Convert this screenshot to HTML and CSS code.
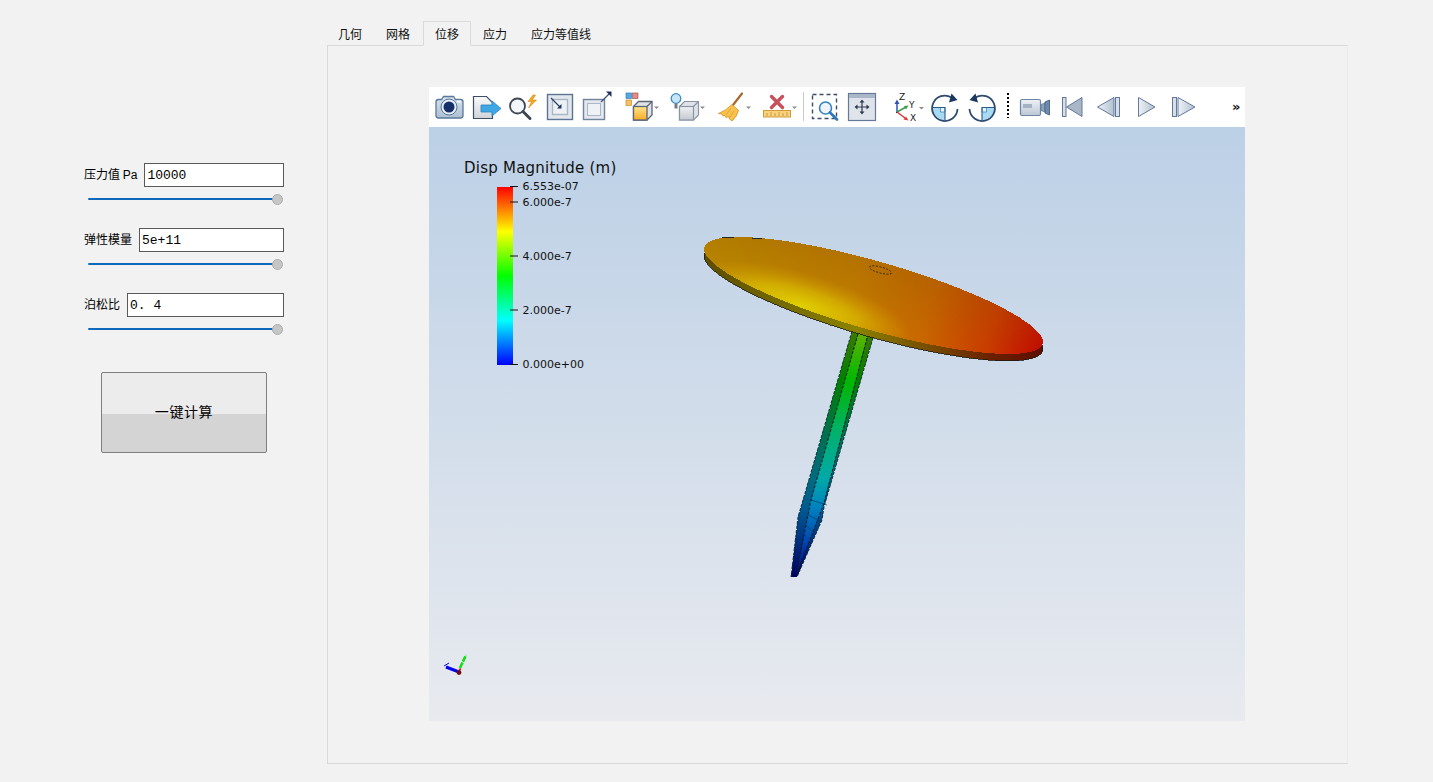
FILE: index.html
```html
<!DOCTYPE html>
<html lang="zh">
<head>
<meta charset="utf-8">
<title>位移</title>
<link rel="stylesheet" href="styles.css">
</head>
<body>
<div class="app">
  <aside class="side">
    <div class="param">
      <div class="param-row"><label class="param-label">压力值 <span class="unit">Pa</span></label><input class="param-input" value="10000"></div>
      <div class="slider"><span class="thumb"></span></div>
    </div>
    <div class="param">
      <div class="param-row"><label class="param-label">弹性模量</label><input class="param-input" value="5e+11"></div>
      <div class="slider"><span class="thumb"></span></div>
    </div>
    <div class="param">
      <div class="param-row"><label class="param-label">泊松比</label><input class="param-input" value="0. 4"></div>
      <div class="slider"><span class="thumb"></span></div>
    </div>
    <button class="run">一键计算</button>
  </aside>
  <main class="main">
    <nav class="tabs">
      <span class="tab">几何</span><span class="tab">网格</span><span class="tab active">位移</span><span class="tab">应力</span><span class="tab">应力等值线</span>
    </nav>
    <section class="pane">
      <div class="viewer">
        <div class="toolbar">
          <svg class="ico" width="37" height="40" viewBox="431 0 37 40">
            <defs><linearGradient id="cam" x1="0" y1="0" x2="0" y2="1"><stop offset="0" stop-color="#d8e3ee"/><stop offset="1" stop-color="#aebfd2"/></linearGradient></defs>
            <path d="M438.500 12.500h3l2-3h10l2 3h5q2.500 0 2.500 2.500v13.500q0 2.500-2.500 2.500h-22q-2.500 0-2.500-2.500v-13.500q0-2.500 2.500-2.500z" fill="url(#cam)" stroke="#5a789c" stroke-width="1.300"/>
            <circle cx="449" cy="20" r="8" fill="#e6eef6" stroke="#56759a"/>
            <circle cx="449" cy="20" r="5.500" fill="#15306a"/>
            <rect x="457" y="13.500" width="4" height="2" fill="#f4f7fa"/>
          </svg>
          <svg class="ico" width="37" height="40" viewBox="468 0 37 40">
            <defs><linearGradient id="pg" x1="0" y1="0" x2="0" y2="1"><stop offset="0" stop-color="#fafafa"/><stop offset="1" stop-color="#cfd3d8"/></linearGradient></defs>
            <path d="M473.500 9.500h13l6 6v16h-19z" fill="url(#pg)" stroke="#3d4f66" stroke-width="1.200"/>
            <path d="M481 18h11v-4l9 7.500-9 7.500v-4h-11z" fill="#3ea7e4" stroke="#2a83c0" stroke-width=".8"/>
          </svg>
          <svg class="ico" width="37" height="40" viewBox="505 0 37 40">
            <circle cx="517.500" cy="19" r="7.500" fill="#f4f7fa" stroke="#3f4752" stroke-width="1.800"/>
            <path d="M523 24.500l7 7" stroke="#3f4752" stroke-width="3" stroke-linecap="round"/>
            <path d="M533 8l-5 6.500h3.500l-3 6.500 8-8h-4l3-5z" fill="#f3a827" stroke="#d98a12" stroke-width=".6"/>
          </svg>
          <svg class="ico" width="37" height="40" viewBox="542 0 37 40">
            <rect x="547.500" y="7.500" width="25" height="25" fill="#e2e7ed" stroke="#5c7391" stroke-width="1.400"/>
            <rect x="552.500" y="12.500" width="15" height="15" fill="#eef1f4" stroke="#a9b6c6" stroke-width="1.400"/>
            <path d="M551 11l9 9" stroke="#2a3f66" stroke-width="1.200"/>
            <path d="M561.500 21.500v-4.500l-4.500 4.500z" fill="#1c3160"/>
          </svg>
          <svg class="ico" width="37" height="40" viewBox="579 0 37 40">
            <rect x="583.500" y="12.500" width="21" height="20" fill="#e4e8ee" stroke="#71849d" stroke-width="1.400"/>
            <rect x="587.500" y="16.500" width="13" height="12" fill="#eff2f5" stroke="#aab6c5"/>
            <path d="M601 15l8-8" stroke="#3c5478" stroke-width="1.300"/>
            <path d="M611.500 4.500v5.500l-5.500-5.500z" fill="#1c3160"/>
          </svg>
          <svg class="ico" width="48" height="40" viewBox="616 0 48 40">
            <rect x="626" y="6" width="5.500" height="5.500" fill="#52a8e0" stroke="#3b82b6" stroke-width=".7"/>
            <rect x="632.500" y="6" width="5.500" height="5.500" fill="#e08a8a" stroke="#a85a5a" stroke-width=".7"/>
            <rect x="626" y="13" width="5.500" height="5.500" fill="#f5c069" stroke="#c98a2a" stroke-width=".7"/>
            <defs><linearGradient id="oc" x1="0" y1="0" x2="0" y2="1"><stop offset="0" stop-color="#ffe48c"/><stop offset="1" stop-color="#f9ac26"/></linearGradient></defs>
            <path d="M633.500 19.500l5-5h13.500v13.500l-5 5h-13.500z" fill="#dfe3e8" stroke="#5b6675" stroke-width="1.300"/>
            <rect x="633.500" y="19.500" width="13.500" height="13.500" fill="url(#oc)" stroke="#5b6675" stroke-width="1.300"/>
            <path d="M647 19.500l5-5" stroke="#5b6675" stroke-width="1.300"/>
            <path class="drop" d="M654 19.500h5l-2.500 2.500z"/>
          </svg>
          <svg class="ico" width="48" height="40" viewBox="664 0 48 40">
            <circle cx="676" cy="11.500" r="4.800" fill="#c6e6f8" stroke="#3f8ac4" stroke-width="1.300"/>
            <rect x="674.500" y="16.500" width="3" height="5" fill="#6f7d8c"/>
            <defs><linearGradient id="gc" x1="0" y1="0" x2="0" y2="1"><stop offset="0" stop-color="#eef0f3"/><stop offset="1" stop-color="#c4cad1"/></linearGradient></defs>
            <path d="M679.500 19.500l5-5h14v13.500l-5 5h-14z" fill="#dfe3e8" stroke="#8b95a2" stroke-width="1.200"/>
            <rect x="679.500" y="19.500" width="14" height="13.500" fill="url(#gc)" stroke="#8b95a2" stroke-width="1.200"/>
            <path d="M693.500 19.500l5-5" stroke="#8b95a2" stroke-width="1.200"/>
            <path class="drop" d="M700 19.500h5l-2.500 2.500z"/>
          </svg>
          <svg class="ico" width="46" height="40" viewBox="712 0 46 40">
            <path d="M742 6.500l-9 11.500" stroke="#a9682a" stroke-width="2.200" stroke-linecap="round"/>
            <path d="M732 17.500l6.500 6q-1.500 6-6.500 10.500l-3-2.500v-2l-3 1-1-2-2 .5-1-2-3.500-.5q7-2.500 13.500-9z" fill="#f8c24e" stroke="#d8962a" stroke-width=".9"/>
            <path d="M731 21l-5 7M734 24l-4 6" stroke="#dd9a2c" stroke-width=".7"/>
            <path class="drop" d="M746 19.500h5l-2.500 2.500z"/>
          </svg>
          <svg class="ico" width="44" height="40" viewBox="758 0 44 40">
            <rect x="763.500" y="23.500" width="27" height="6.500" fill="#f8d27c" stroke="#d39a3c"/>
            <path d="M767 26v3M771 25v4M775 26v3M779 25v4M783 26v3M787 25v4" stroke="#b5852c" stroke-width=".7"/>
            <path d="M771.500 9.500l11 11M782.500 9.500l-11 11" stroke="#c8505a" stroke-width="3.400" stroke-linecap="round"/>
            <path class="drop" d="M792 19.500h5l-2.500 2.500z"/>
          </svg>
          <span class="sep"></span>
          <svg class="ico" width="38" height="40" viewBox="806 0 38 40">
            <rect x="812.500" y="7.500" width="24" height="24" fill="none" stroke="#3a4c66" stroke-width="1.400" stroke-dasharray="4 3"/>
            <circle cx="825.500" cy="21" r="6" fill="#eef4fa" stroke="#3584c4" stroke-width="1.600"/>
            <path d="M830 25.500l7 7" stroke="#2a78bd" stroke-width="2.600" stroke-linecap="round"/>
          </svg>
          <svg class="ico" width="37" height="40" viewBox="844 0 37 40">
            <rect x="848.500" y="6.500" width="27" height="27" fill="#dfe4ea" stroke="#64789a" stroke-width="1.200"/>
            <rect x="849" y="7" width="26" height="4" fill="#a9b7c9"/>
            <path d="M862 14v12M856 20h12" stroke="#2c3a4f" stroke-width="1.200"/>
            <path d="M862 12.500l2.500 3h-5zM862 27.500l2.500-3h-5zM854.500 20l3-2.500v5zM869.500 20l-3-2.500v5z" fill="#2c3a4f"/>
          </svg>
          <svg class="ico ico-axes" width="41" height="40" viewBox="886 0 41 40">
            <path d="M897 25v-9" stroke="#2a55b0" stroke-width="1.500"/>
            <path d="M897 12.500l2.500 4.500h-5z" fill="#2a55b0"/>
            <path d="M897 25l9-5" stroke="#3aa04a" stroke-width="1.500"/>
            <path d="M908.500 18.500l-4.500 .5 2 3.500z" fill="#3aa04a"/>
            <path d="M897 25l8 6" stroke="#d93a3a" stroke-width="1.500"/>
            <path d="M908.500 33.500l-5-1 2.500-3z" fill="#d93a3a"/>
            <path d="M897 25l-1 1" stroke="#333"/>
            <text class="axis-letter" x="899" y="13">Z</text>
            <text class="axis-letter" x="909" y="21">Y</text>
            <text class="axis-letter" x="910" y="34">X</text>
            <path class="drop" d="M919 20h5l-2.500 2.500z"/>
          </svg>
          <svg class="ico" width="37" height="40" viewBox="927 0 37 40">
            <g>
              <path d="M932.500 20.500h12.500v12.500a12.500 12.500 0 0 1 -12.500 -12.500z" fill="#a9daf4"/>
              <path d="M940.500 20.500h4.500v4.500h-4.500z" fill="#e6f5fc" stroke="#3f86b6" stroke-width=".8"/>
              <path d="M932 20.500h13v12.500" fill="none" stroke="#2d5a88" stroke-width="1.100"/>
              <path d="M957.500 22a12.700 12.700 0 1 1 -6 -11.500" fill="none" stroke="#2d4a70" stroke-width="1.800"/>
              <path d="M951.500 6.500l6 6.500-8.500 2.500z" fill="#1d3a5e"/>
            </g>
          </svg>
          <svg class="ico" width="37" height="40" viewBox="964 0 37 40">
            <g transform="translate(1927 0) scale(-1 1)">
              <path d="M932.500 20.500h12.500v12.500a12.500 12.500 0 0 1 -12.500 -12.500z" fill="#a9daf4"/>
              <path d="M940.500 20.500h4.500v4.500h-4.500z" fill="#e6f5fc" stroke="#3f86b6" stroke-width=".8"/>
              <path d="M932 20.500h13v12.500" fill="none" stroke="#2d5a88" stroke-width="1.100"/>
              <path d="M957.500 22a12.700 12.700 0 1 1 -6 -11.500" fill="none" stroke="#2d4a70" stroke-width="1.800"/>
              <path d="M951.500 6.500l6 6.500-8.500 2.500z" fill="#1d3a5e"/>
            </g>
          </svg>
          <span class="dots"></span>
          <svg class="ico" width="38" height="40" viewBox="1016 0 38 40">
            <defs><linearGradient id="vc" x1="0" y1="0" x2="0" y2="1"><stop offset="0" stop-color="#eef1f5"/><stop offset="1" stop-color="#bcc8d6"/></linearGradient></defs>
            <rect x="1020.500" y="12.500" width="20" height="16" rx="1.500" fill="url(#vc)" stroke="#6e86a5" stroke-width="1.200"/>
            <rect x="1023" y="17" width="9" height="4" fill="#a4b2c3"/>
            <path d="M1041 17.500l4-1.500v9l-4-1.500z" fill="#8ca3bd" stroke="#5a7595" stroke-width=".7"/>
            <path d="M1045 15l4.500-2v15l-4.500-2z" fill="#6f8bab" stroke="#4e6b8c"/>
          </svg>
          <svg class="ico" width="37" height="40" viewBox="1054 0 37 40">
            <defs><linearGradient id="tr" x1="0" y1="0" x2="1" y2="0"><stop offset="0" stop-color="#eef2f6"/><stop offset="1" stop-color="#b3c0cf"/></linearGradient></defs>
            <rect x="1062.500" y="10.500" width="3.500" height="19" fill="#d6dee7" stroke="#64789a"/>
            <path d="M1082 10.500v19l-15.500-9.500z" fill="#a8b6c6" stroke="#64789a"/>
          </svg>
          <svg class="ico" width="37" height="40" viewBox="1091 0 37 40">
            <path d="M1114 10.500v19l-16.500-9.500z" fill="url(#tr)" stroke="#64789a"/>
            <rect x="1115.500" y="10.500" width="4" height="19" fill="#d6dee7" stroke="#64789a"/>
          </svg>
          <svg class="ico" width="37" height="40" viewBox="1128 0 37 40">
            <path d="M1138.500 10.500v19l16.500-9.500z" fill="url(#tr)" stroke="#64789a"/>
          </svg>
          <svg class="ico" width="38" height="40" viewBox="1165 0 38 40">
            <rect x="1172.500" y="10.500" width="4" height="19" fill="#d6dee7" stroke="#64789a"/>
            <path d="M1178 10.500v19l17-9.500z" fill="url(#tr)" stroke="#64789a"/>
          </svg>
          <span class="more">»</span>
        </div>
        <svg class="scene" width="816" height="594" viewBox="429 127 816 594">
          <defs>
            <linearGradient id="bg" x1="0" y1="0" x2="0" y2="1"><stop offset="0" stop-color="#bcd0e6"/><stop offset="1" stop-color="#e8eaef"/></linearGradient>
            <linearGradient id="rainbow" x1="0" y1="1" x2="0" y2="0">
              <stop offset="0" stop-color="#0000ff"/><stop offset=".25" stop-color="#00ffff"/><stop offset=".5" stop-color="#00ff00"/><stop offset=".75" stop-color="#ffff00"/><stop offset="1" stop-color="#ff0000"/>
            </linearGradient>
            <linearGradient id="top" gradientUnits="userSpaceOnUse" x1="720" y1="255" x2="1040" y2="345" gradientTransform="rotate(-15.950 873.500 295.500)">
              <stop offset="0" stop-color="#b98600"/><stop offset=".4" stop-color="#c28000"/><stop offset=".65" stop-color="#c86800"/><stop offset=".85" stop-color="#cc3c00"/><stop offset="1" stop-color="#c80800"/>
            </linearGradient>
            <radialGradient id="yel" gradientUnits="userSpaceOnUse" cx="0" cy="0" r="1" gradientTransform="rotate(-15.950 873.500 295.500) translate(800 306) rotate(16) scale(115 34)">
              <stop offset="0" stop-color="#e0d000"/><stop offset=".5" stop-color="#dcc000" stop-opacity=".7"/><stop offset="1" stop-color="#d8a800" stop-opacity="0"/>
            </radialGradient>
            <linearGradient id="shade" gradientUnits="userSpaceOnUse" x1="890" y1="258" x2="870" y2="322" gradientTransform="rotate(-15.950 873.500 295.500)">
              <stop offset="0" stop-color="#8a4a00" stop-opacity=".3"/><stop offset="1" stop-color="#8a4a00" stop-opacity="0"/>
            </linearGradient>
            <linearGradient id="edge" gradientUnits="userSpaceOnUse" x1="704" y1="0" x2="1043" y2="0" gradientTransform="rotate(-15.950 873.500 295.500)">
              <stop offset="0" stop-color="#5c4c00"/><stop offset=".25" stop-color="#776c00"/><stop offset=".45" stop-color="#8b8200"/><stop offset=".62" stop-color="#7a5600"/><stop offset=".85" stop-color="#6a2000"/><stop offset="1" stop-color="#5e0d00"/>
            </linearGradient>
            <linearGradient id="stem" gradientUnits="userSpaceOnUse" x1="0" y1="332" x2="0" y2="577">
              <stop offset="0" stop-color="#62b000"/><stop offset=".2" stop-color="#00b800"/><stop offset=".42" stop-color="#00b070"/><stop offset=".6" stop-color="#00a8a8"/><stop offset=".72" stop-color="#0080c0"/><stop offset=".85" stop-color="#0048b0"/><stop offset="1" stop-color="#000080"/>
            </linearGradient>
            <linearGradient id="stemd" gradientUnits="userSpaceOnUse" x1="0" y1="332" x2="0" y2="577">
              <stop offset="0" stop-color="#3a7a00"/><stop offset=".2" stop-color="#008000"/><stop offset=".42" stop-color="#007050"/><stop offset=".6" stop-color="#006a80"/><stop offset=".72" stop-color="#005a90"/><stop offset=".85" stop-color="#003080"/><stop offset="1" stop-color="#000060"/>
            </linearGradient>
          </defs>
          <rect x="429" y="127" width="816" height="594" fill="url(#bg)"/>
          <text class="legend-title" x="464" y="173">Disp Magnitude (m)</text>
          <rect x="497" y="187" width="16" height="178" fill="url(#rainbow)"/>
          <path d="M510 186.500h8M510 202h8M510 256h8M510 310h8M510 364.500h8" stroke="#111" stroke-width="1"/>
          <text class="legend-tick" x="522.500" y="190">6.553e-07</text>
          <text class="legend-tick" x="522.500" y="206">6.000e-7</text>
          <text class="legend-tick" x="522.500" y="260">4.000e-7</text>
          <text class="legend-tick" x="522.500" y="314">2.000e-7</text>
          <text class="legend-tick" x="522.500" y="368">0.000e+00</text>
          <g shape-rendering="crispEdges">
            <path d="M852 331L873 338L824 507L822 520L797 577H791L798 517L803 500Z" fill="url(#stemd)"/>
            <path d="M858 334L867 337L827 490L823 507L813 532L797 572L808 515L810 503Z" fill="url(#stem)"/>
          </g>
          <path d="M852 331L803 500L798 517L791 577M873 338L824 507L822 520L797 577" fill="none" stroke="#16303a" stroke-width="1" stroke-dasharray="3 1.500"/>
          <path d="M858 334L811 500L808 515L797 570M867 338L824 503L813 532L797 572" fill="none" stroke="#0d1f24" stroke-width="1" stroke-dasharray="3 1.500"/>
          <path d="M811 500L827 505M808 515L822 522M806 525L816 535" fill="none" stroke="#0d2a50" stroke-width=".8" opacity=".7"/>
          <g shape-rendering="crispEdges" transform="rotate(15.950 873.500 295.500)">
            <ellipse cx="875.400" cy="302.200" rx="176" ry="34.200" fill="url(#edge)" stroke="#1c1c14" stroke-width=".8"/>
            <ellipse cx="873.500" cy="295.500" rx="176" ry="34.200" fill="url(#top)"/>
            <ellipse cx="873.500" cy="295.500" rx="176" ry="34.200" fill="url(#yel)"/>
            <ellipse cx="873.500" cy="295.500" rx="176" ry="34.200" fill="url(#shade)"/>
          </g>
          <path d="M722 237.500h12M752 238h10M728 237.500h1" stroke="#22262a" stroke-width="1" shape-rendering="crispEdges"/>
          <ellipse cx="880.500" cy="270" rx="11.500" ry="3" transform="rotate(15 880.500 270)" fill="none" stroke="#222" stroke-width=".8" stroke-dasharray="2 1.500"/>
          <path d="M460 668L466 655" stroke="#10e010" stroke-width="2.600" stroke-dasharray="6 1"/>
          <path d="M459 672L446 667" stroke="#0000f0" stroke-width="3"/>
          <path d="M444 666l5-3" stroke="#0000f0" stroke-width="1"/>
          <path d="M459 669.500l2-.500" stroke="#e01010" stroke-width="1.500"/>
          <circle cx="459" cy="672.500" r="2.400" fill="#6a0f10"/>
        </svg>
      </div>
    </section>
  </main>
</div>
</body>
</html>
```

FILE: styles.css
```css
* { box-sizing: border-box; }
html, body { margin: 0; height: 100%; }
body {
  background: #f2f2f2;
  color: #000;
  font-family: "Noto Sans CJK SC", "Liberation Sans", sans-serif;
  font-size: 12px;
  overflow: hidden;
}
.app { display: flex; height: 782px; }

/* left panel */
.side {
  width: 327px;
  flex: none;
  padding: 163px 43px 0 84px;
  display: flex;
  flex-direction: column;
}
.param { height: 65px; }
.param-row { display: flex; align-items: center; height: 24px; gap: 7px; }
.param-label { white-space: nowrap; font-size: 12px; line-height: 20px; margin-top: -2px; }
.unit { font-family: "Liberation Sans", sans-serif; font-size: 12px; }
.param-input {
  flex: 1;
  min-width: 0;
  height: 24px;
  border: 1px solid #5a5a5a;
  background: #fff;
  padding: 1px 3px 0 2px;
  font-family: "Liberation Mono", monospace;
  font-size: 13px;
  color: #000;
  outline: none;
}
.slider {
  position: relative;
  height: 2px;
  margin: 11px 6px 0 4px;
  background: #0f69ba;
  border-radius: 1px;
}
.thumb {
  position: absolute;
  right: -5px;
  top: -4px;
  width: 11px;
  height: 11px;
  border-radius: 50%;
  background: #c6c6c6;
  border: 1px solid #adadad;
}
.run {
  width: 166px;
  height: 81px;
  margin: 14px 0 0 17px;
  border: 1px solid #7f7f7f;
  border-radius: 2px;
  background: linear-gradient(#ececec 0 52%, #d4d4d4 52% 100%);
  font-family: "Noto Sans CJK SC", sans-serif;
  font-size: 14px;
  letter-spacing: .6px;
  color: #000;
  padding: 0 0 4px;
}

/* tabs and pane */
.main {
  width: 1021px;
  flex: none;
  padding-top: 21px;
  display: flex;
  flex-direction: column;
}
.tabs { display: flex; height: 24px; margin-left: -1px; }
.tab {
  padding: 0 12px;
  line-height: 26px;
  height: 25px;
  font-size: 12px;
  white-space: nowrap;
  color: #111;
}
.tab.active {
  margin: 0 0 0 1px;
  padding: 0 11px;
  background: #f2f2f2;
  border: 1px solid #dadada;
  border-bottom-color: #f2f2f2;
  line-height: 24px;
  z-index: 1;
}
.pane {
  width: 1021px;
  height: 719px;
  border: 1px solid #d9d9d9;
  border-right-color: #ececec;
  background: #f2f2f2;
  padding: 41px 0 0 101px;
}
.viewer { width: 816px; display: flex; flex-direction: column; }
.toolbar {
  display: flex;
  align-items: stretch;
  height: 40px;
  background: #fff;
  padding-left: 2px;
}
.ico { display: block; flex: none; }
.drop { fill: #8b8b8b; }
.sep { width: 1px; height: 29px; margin: 5px 2px 0 1px; background: #c9c9c9; flex: none; }
.ico-axes { margin-left: 5px; }
.axis-letter { font-family: "DejaVu Sans", sans-serif; font-size: 9px; fill: #222; }
.dots {
  flex: none;
  width: 2px;
  height: 25px;
  margin: 6px 7px 0 6px;
  background: repeating-linear-gradient(#000 0 2px, transparent 2px 4px);
}
.more {
  flex: none;
  margin-left: 29px;
  font-family: "DejaVu Sans", sans-serif;
  font-size: 13px;
  font-weight: 700;
  line-height: 40px;
  color: #111;
}
.scene { display: block; }
.legend-title { font-family: "DejaVu Sans", sans-serif; font-size: 15px; letter-spacing: .23px; fill: #111; }
.legend-tick { font-family: "DejaVu Sans", sans-serif; font-size: 11px; fill: #111; }
```
